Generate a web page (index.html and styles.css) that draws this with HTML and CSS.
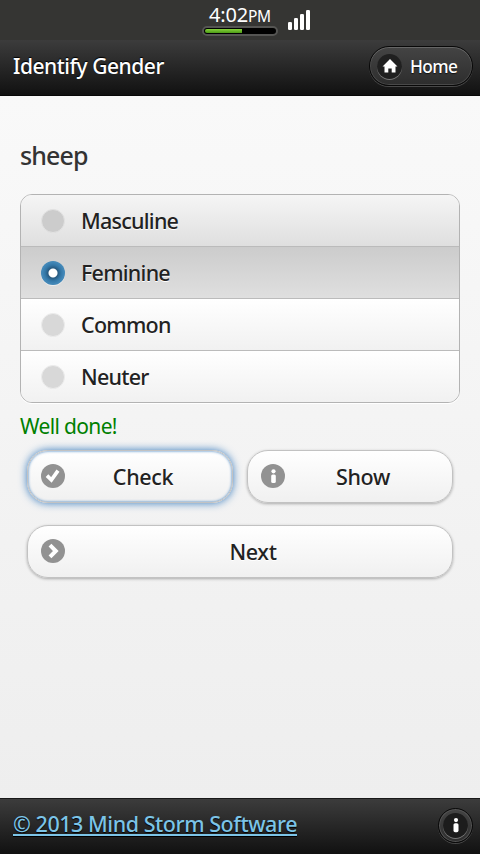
FILE: index.html
```html
<!DOCTYPE html>
<html lang="en">
<head>
<meta charset="utf-8">
<title>Identify Gender</title>
<link rel="stylesheet" href="styles.css">
</head>
<body>
<div class="status">
  <div class="clock">
    <div class="time">4:02<span class="pm">PM</span></div>
    <div class="battery"><div class="charge"></div></div>
  </div>
  <svg class="signal" width="22" height="21" viewBox="0 0 22 21" fill="#fff">
    <rect x="0" y="12" width="4" height="8" rx="1.3"/><rect x="6" y="8" width="4" height="12" rx="1.3"/><rect x="12" y="4" width="4" height="16" rx="1.3"/><rect x="18" y="0" width="4" height="20" rx="1.3"/>
  </svg>
</div>
<header class="header">
  <h1 class="title">Identify Gender</h1>
  <a class="home">
    <span class="home-icon"><svg width="16" height="14" viewBox="0 0 16 14" fill="#fff"><path d="M8 0L15.5 7.5H13.5V13.5H9.7V9.5H6.3V13.5H2.5V7.5H.5Z"/></svg></span>
    <span class="home-text">Home</span>
  </a>
</header>
<main class="content">
  <h2 class="word">sheep</h2>
  <div class="options">
    <label class="option hover"><span class="dot"></span><span>Masculine</span></label>
    <label class="option active"><span class="dot on"></span><span>Feminine</span></label>
    <label class="option"><span class="dot"></span><span>Common</span></label>
    <label class="option"><span class="dot"></span><span>Neuter</span></label>
  </div>
  <p class="result">Well done!</p>
  <div class="buttons">
    <button class="btn focus"><svg class="icon" viewBox="0 0 24 24"><circle cx="12" cy="12" r="12" fill="#929292"/><path d="M6 11.6L10.4 16L17 6.6" fill="none" stroke="#fff" stroke-width="3.7"/></svg><span>Check</span></button>
    <button class="btn"><svg class="icon" viewBox="0 0 24 24"><circle cx="12" cy="12" r="12" fill="#929292"/><circle cx="12.5" cy="7.3" r="2.1" fill="#fff"/><rect x="10.2" y="10.4" width="4.6" height="8.6" rx="1.5" fill="#fff"/></svg><span>Show</span></button>
    <button class="btn wide"><svg class="icon" viewBox="0 0 24 24"><circle cx="12" cy="12" r="12" fill="#929292"/><path d="M9 6.2L14.8 12L9 17.8" fill="none" stroke="#fff" stroke-width="4"/></svg><span>Next</span></button>
  </div>
</main>
<footer class="footer">
  <a class="copyright">© 2013 Mind Storm Software</a>
  <span class="info"><span class="info-disc"><svg width="6" height="15" viewBox="0 0 6 15" fill="#fff"><circle cx="3" cy="2.1" r="2.1"/><rect x=".5" y="5.2" width="5" height="9" rx="1.6"/></svg></span></span>
</footer>
</body>
</html>
```
FILE: styles.css
```css
* { box-sizing: border-box; }
body {
  margin: 0;
  width: 480px;
  height: 854px;
  overflow: hidden;
  display: flex;
  flex-direction: column;
  font-family: "Noto Sans", "Open Sans", sans-serif;
  font-weight: 500;
  color: #222;
  background: #f2f2f2;
}
.status {
  height: 40px;
  flex: none;
  display: flex;
  background: #353533;
  padding-left: 202px;
}
.clock { width: 76px; }
.time {
  height: 26px;
  line-height: 29px;
  padding-left: 7px;
  font-size: 20px;
  letter-spacing: -.2px;
  font-weight: 400;
  color: #fff;
  white-space: nowrap;
}
.pm { font-size: 15.5px; }
.battery {
  height: 10px;
  border: 2px solid #555553;
  border-radius: 5px;
  background: #000;
  padding: 1px;
}
.charge {
  width: 37px;
  height: 4px;
  border-radius: 2px 0 0 2px;
  background: linear-gradient(#86d23c, #4c9c16);
}
.signal { margin: 10px 0 0 10px; }
.header {
  height: 56px;
  flex: none;
  display: flex;
  justify-content: space-between;
  align-items: flex-start;
  padding: 6px 7px 0 13px;
  background: linear-gradient(#3c3c3c, #111);
  border-bottom: 1px solid #080808;
  color: #fff;
}
.title {
  margin: 0;
  font-size: 21px;
  letter-spacing: -.47px;
  font-weight: 500;
  line-height: 40px;
  text-shadow: 0 -1px 1px #000;
}
.home {
  width: 104px;
  height: 40px;
  display: flex;
  align-items: center;
  padding-left: 7px;
  border: 1px solid #080808;
  border-radius: 20px;
  background: linear-gradient(#444, #2d2d2d);
  box-shadow: inset 0 1px 0 #666, inset 0 0 0 1px #494949, 0 1px 0 #484848;
}
.home-icon {
  width: 25px;
  height: 25px;
  display: flex;
  align-items: center;
  justify-content: center;
  border-radius: 50%;
  background: #202020;
  box-shadow: 0 1px 0 #777;
}
.home-text {
  margin-left: 8px;
  padding-top: 1px;
  font-size: 17.3px;
  letter-spacing: -.6px;
  line-height: 36px;
  text-shadow: 0 1px 1px #111;
}
.content {
  flex: 1;
  padding: 0 20px;
  background: linear-gradient(#f9f9f9, #eee);
}
.word {
  margin: 39px 0 19px;
  font-size: 25px;
  letter-spacing: -.9px;
  font-weight: 500;
  line-height: 40px;
  color: #333;
}
.options {
  border: 1px solid #b3b3b3;
  border-radius: 12px;
  overflow: hidden;
  box-shadow: 0 1px 0 #fff;
}
.option {
  height: 52px;
  display: flex;
  align-items: center;
  padding-left: 20px;
  font-size: 21.5px;
  letter-spacing: -.75px;
  border-bottom: 1px solid #bbb;
  background: linear-gradient(#fff, #f1f1f1);
  text-shadow: 0 1px 0 #fff;
}
.option:last-child { height: 51px; border-bottom: 0; }
.option.hover { background: linear-gradient(#f5f5f5, #dfdfdf); }
.option.active { background: linear-gradient(#ccc, #dfdfdf); }
.dot {
  width: 24px;
  height: 24px;
  margin-right: 16px;
  border: 1px solid #ececec;
  border-radius: 50%;
  background: #d8d8d8;
}
.hover .dot { background: #ccc; border-color: #e2e2e2; }
.dot.on {
  border: 0;
  background: radial-gradient(circle, #fff 4px, #285a80 5px, #3478a8 8px, #4388b8 11px);
  box-shadow: 0 1px 0 #eee;
}
.result {
  margin: 8px 0 8px;
  font-size: 21px;
  letter-spacing: -.65px;
  font-weight: 400;
  line-height: 31px;
  color: #008000;
}
.buttons {
  display: grid;
  grid-template-columns: 206px 206px;
  gap: 22px 14px;
  padding-left: 7px;
}
.btn {
  height: 53px;
  display: flex;
  align-items: center;
  padding: 0 11px 0 13px;
  border: 1px solid #c2c2c2;
  border-radius: 21px;
  background: linear-gradient(#fff, #f0f0f0);
  box-shadow: 0 1px 3px rgba(0, 0, 0, .3);
  font: 500 21.5px/50px "Noto Sans", "Open Sans", sans-serif;
  letter-spacing: -.35px;
  color: #222;
  text-shadow: 0 1px 0 #fff;
}
.btn span { flex: 1; text-align: center; padding-top: 1px; }
.btn.focus { box-shadow: inset 0 0 3px #387bbe, 0 0 9px #387bbe; }
.wide { grid-column: 1 / 3; }
.icon { width: 24px; height: 24px; flex: none; margin-bottom: 1px; }
.footer {
  height: 56px;
  flex: none;
  display: flex;
  justify-content: space-between;
  align-items: center;
  padding: 0 7px 2px 13px;
  border-top: 1px solid #181818;
  background: linear-gradient(#3c3c3c, #111);
}
.copyright {
  font-size: 21.5px;
  letter-spacing: -.46px;
  padding-bottom: 5px;
  color: #7cc4e7;
  text-decoration: underline;
  text-decoration-thickness: 1.5px;
  text-underline-offset: 2px;
  text-shadow: 0 1px 1px #000;
}
.info {
  width: 35px;
  height: 35px;
  display: flex;
  align-items: center;
  justify-content: center;
  border: 1px solid #080808;
  border-radius: 50%;
  background: linear-gradient(#444, #2d2d2d);
  box-shadow: inset 0 0 0 1px #555, 0 1px 0 #484848;
}
.info-disc {
  width: 25px;
  height: 25px;
  display: flex;
  align-items: center;
  justify-content: center;
  border-radius: 50%;
  background: #1c1c1c;
  box-shadow: 0 1px 0 #777;
}
```
